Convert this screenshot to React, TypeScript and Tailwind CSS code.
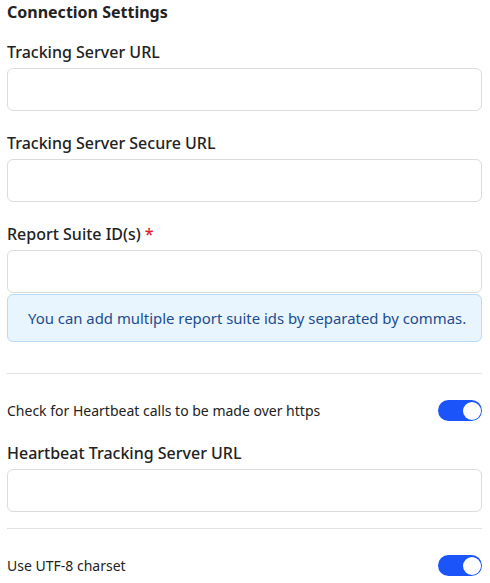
export default function App() {
  const Field = ({ label, required, first }: { label: string; required?: boolean; first?: boolean }) => (
    <div className={first ? "mt-4" : "mt-5"}>
      <label className="block text-[16px] font-medium leading-6 text-[#222]">
        {label}
        {required && <span className="ml-1 text-[#e02020]">*</span>}
      </label>
      <input className="mt-1 block h-[43px] w-full rounded-md border border-[#dcdcdc] bg-white px-3 outline-none" />
    </div>
  );

  const Toggle = () => (
    <div className="flex h-[21px] w-[44px] shrink-0 items-center justify-end rounded-full bg-[#1b54f8] pr-[1.5px]">
      <div className="h-[18px] w-[18px] rounded-full bg-white" />
    </div>
  );

  return (
    <div className="min-h-screen bg-white pl-[7px] pr-[8px] text-[#222]" style={{ fontFamily: '"Noto Sans", sans-serif' }}>
      <h2 className="text-[16px] font-bold leading-6">Connection Settings</h2>

      <Field label="Tracking Server URL" first />
      <Field label="Tracking Server Secure URL" />
      <Field label="Report Suite ID(s)" required />
      <div className="mt-px flex h-[48px] items-center whitespace-nowrap rounded-md border border-[#b9daf8] bg-[#e8f4fe] pl-5 pr-2 text-[14.9px] text-[#1d4d8f]">
        You can add multiple report suite ids by separated by commas.
      </div>

      <div className="mt-[31px] border-t border-[#e2e2e2]" />
      <div className="mt-[26px] flex h-[21px] items-center justify-between">
        <span className="text-[14px] leading-5">Check for Heartbeat calls to be made over https</span>
        <Toggle />
      </div>

      <Field label="Heartbeat Tracking Server URL" />

      <div className="mt-4 border-t border-[#e2e2e2]" />
      <div className="mt-[26px] flex h-[21px] items-center justify-between">
        <span className="text-[14px] leading-5">Use UTF-8 charset</span>
        <Toggle />
      </div>
    </div>
  );
}
